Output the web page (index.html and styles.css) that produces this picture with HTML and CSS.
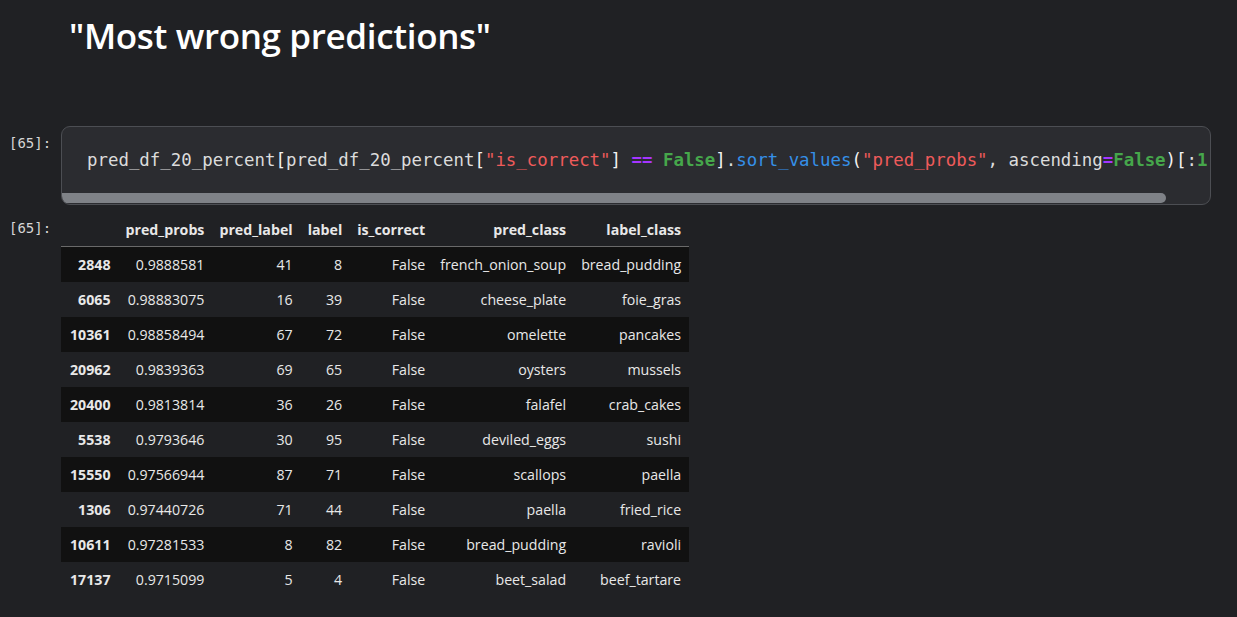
FILE: index.html
```html
<!DOCTYPE html>
<html>
<head>
<meta charset="utf-8">
<link rel="stylesheet" href="styles.css">
</head>
<body>
<div class="nb">
  <div class="md-cell">
    <h1 class="title">"Most wrong predictions"</h1>
  </div>
  <div class="cell code-row">
    <div class="prompt">[65]:</div>
    <div class="editor">
      <div class="code-line"><span class="t">pred_df_20_percent</span><span class="p">[</span><span class="t">pred_df_20_percent</span><span class="p">[</span><span class="s">"is_correct"</span><span class="p">]</span> <span class="o">==</span> <span class="k">False</span><span class="p">]</span><span class="t">.</span><span class="f">sort_values</span><span class="p">(</span><span class="s">"pred_probs"</span><span class="t">, ascending</span><span class="o">=</span><span class="k">False</span><span class="p">)[</span><span class="t">:</span><span class="k">1</span></div>
      <div class="hscroll"><div class="thumb"></div></div>
    </div>
  </div>
  <div class="cell out-row">
    <div class="prompt out-prompt">[65]:</div>
    <div class="output">
      <table class="df">
        <thead>
          <tr><th class="idx"></th><th>pred_probs</th><th>pred_label</th><th>label</th><th>is_correct</th><th>pred_class</th><th>label_class</th></tr>
        </thead>
        <tbody>
          <tr><th class="idx">2848</th><td>0.9888581</td><td>41</td><td>8</td><td>False</td><td>french_onion_soup</td><td>bread_pudding</td></tr>
          <tr><th class="idx">6065</th><td>0.98883075</td><td>16</td><td>39</td><td>False</td><td>cheese_plate</td><td>foie_gras</td></tr>
          <tr><th class="idx">10361</th><td>0.98858494</td><td>67</td><td>72</td><td>False</td><td>omelette</td><td>pancakes</td></tr>
          <tr><th class="idx">20962</th><td>0.9839363</td><td>69</td><td>65</td><td>False</td><td>oysters</td><td>mussels</td></tr>
          <tr><th class="idx">20400</th><td>0.9813814</td><td>36</td><td>26</td><td>False</td><td>falafel</td><td>crab_cakes</td></tr>
          <tr><th class="idx">5538</th><td>0.9793646</td><td>30</td><td>95</td><td>False</td><td>deviled_eggs</td><td>sushi</td></tr>
          <tr><th class="idx">15550</th><td>0.97566944</td><td>87</td><td>71</td><td>False</td><td>scallops</td><td>paella</td></tr>
          <tr><th class="idx">1306</th><td>0.97440726</td><td>71</td><td>44</td><td>False</td><td>paella</td><td>fried_rice</td></tr>
          <tr><th class="idx">10611</th><td>0.97281533</td><td>8</td><td>82</td><td>False</td><td>bread_pudding</td><td>ravioli</td></tr>
          <tr><th class="idx">17137</th><td>0.9715099</td><td>5</td><td>4</td><td>False</td><td>beet_salad</td><td>beef_tartare</td></tr>
        </tbody>
      </table>
    </div>
  </div>
</div>
</body>
</html>
```
FILE: styles.css
```css
html, body {
  margin: 0;
  padding: 0;
  background: #202124;
  height: 100%;
  overflow: hidden;
}
.nb {
  display: flex;
  flex-direction: column;
}
.md-cell {
  padding: 13px 0 0 69px;
  height: 112px;
  box-sizing: border-box;
}
.title {
  margin: 0;
  font-family: "Open Sans", "Noto Sans", sans-serif;
  font-weight: 600;
  font-size: 35px;
  line-height: 46px;
  color: #ffffff;
  letter-spacing: -0.35px;
}
.cell {
  display: flex;
  align-items: flex-start;
}
.code-row {
  margin-top: 14px;
}
.prompt {
  width: 61px;
  flex: none;
  box-sizing: border-box;
  padding-left: 9px;
  font-family: "DejaVu Sans Mono", monospace;
  font-size: 14px;
  color: #d6d6d6;
}
.code-row .prompt {
  padding-top: 9px;
}
.editor {
  width: 1150px;
  height: 79px;
  box-sizing: border-box;
  background: #2b2c30;
  border: 1px solid #4c4e53;
  border-radius: 9px;
  overflow: hidden;
  display: flex;
  flex-direction: column;
}
.code-line {
  flex: 1;
  white-space: pre;
  overflow: hidden;
  padding: 21px 0 0 25px;
  font-family: "DejaVu Sans Mono", monospace;
  font-size: 17.4px;
  line-height: 24px;
  color: #dcdcdc;
}
.t { color: #dcdcdc; }
.p { color: #f2f2f2; }
.s { color: #ef5b5b; }
.o { color: #a535ff; font-weight: bold; }
.k { color: #46a74b; font-weight: bold; }
.f { color: #3590e8; }
.hscroll {
  height: 10px;
  margin-bottom: 1px;
}
.thumb {
  width: 1104px;
  height: 10px;
  background: #7f8287;
  border-radius: 0 5px 5px 0;
}
.out-row {
  margin-top: 7px;
}
.out-prompt {
  padding-top: 8px;
}
.df {
  border-collapse: collapse;
  font-family: "Open Sans", "Noto Sans", sans-serif;
  font-size: 14.2px;
  color: #e8e8e8;
}
.df th, .df td {
  text-align: right;
  padding: 0 7.5px;
  height: 35px;
  white-space: nowrap;
}
.df .idx {
  padding-left: 9px;
  padding-right: 7.5px;
}
.df thead th {
  font-weight: 700;
  height: 34px;
  vertical-align: middle;
  border-bottom: 1px solid #6a6a6a;
}
.df tbody th {
  font-weight: 700;
}
.df tbody tr:nth-child(odd) {
  background: #111111;
}
```
